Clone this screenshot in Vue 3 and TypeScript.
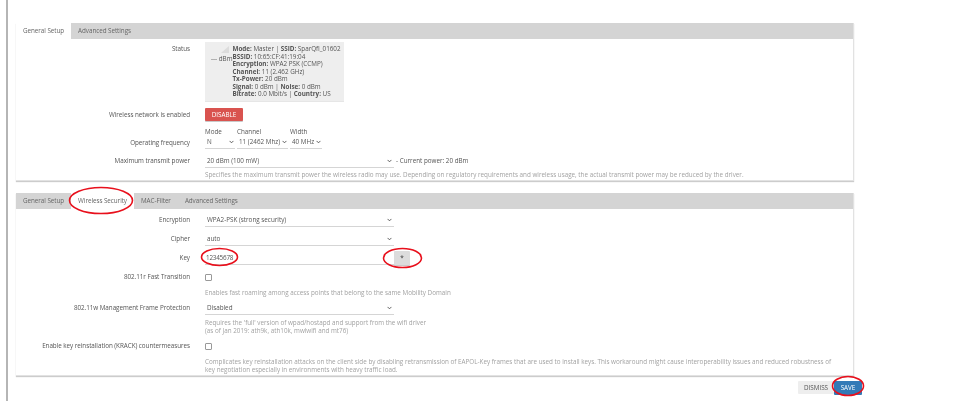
<script setup lang="ts">
interface Tab { label: string; active?: boolean }
const tabsA: Tab[] = [{ label: 'General Setup', active: true }, { label: 'Advanced Settings' }]
const tabsB: Tab[] = [{ label: 'General Setup' }, { label: 'Wireless Security', active: true }, { label: 'MAC-Filter' }, { label: 'Advanced Settings' }]
</script>

<template>
  <div class="page">
    <section class="panel first">
      <nav class="tabs">
        <span v-for="t in tabsA" :key="t.label" class="tab" :class="{ active: t.active }">{{ t.label }}</span>
      </nav>
      <div class="body body-a">
        <div class="row status-row">
          <label>Status</label>
          <div class="status">
            <div class="signal">
              <svg width="8" height="7" viewBox="0 0 8 7"><path d="M0 7 L8 0 V7 Z" fill="#dcdcdc" /></svg>
              <span>--- dBm</span>
            </div>
            <div class="info">
              <div><b>Mode:</b> Master | <b>SSID:</b> SparQfi_01602</div>
              <div><b>BSSID:</b> 10:65:CF:41:19:04</div>
              <div><b>Encryption:</b> WPA2 PSK (CCMP)</div>
              <div><b>Channel:</b> 11 (2.462 GHz)</div>
              <div><b>Tx-Power:</b> 20 dBm</div>
              <div><b>Signal:</b> 0 dBm | <b>Noise:</b> 0 dBm</div>
              <div><b>Bitrate:</b> 0.0 Mbit/s | <b>Country:</b> US</div>
            </div>
          </div>
        </div>
        <div class="row disable-row">
          <label>Wireless network is enabled</label>
          <button class="btn red">DISABLE</button>
        </div>
        <div class="row freq-row">
          <label>Operating frequency</label>
          <div class="freq">
            <div class="col c-mode"><span class="cap">Mode</span><div class="select small"><span>N</span><svg class="chev" viewBox="0 0 6 4"><path d="M.7.7 3 3 5.3.7" /></svg></div></div>
            <div class="col c-chan"><span class="cap">Channel</span><div class="select small"><span>11 (2462 Mhz)</span><svg class="chev" viewBox="0 0 6 4"><path d="M.7.7 3 3 5.3.7" /></svg></div></div>
            <div class="col c-width"><span class="cap">Width</span><div class="select small"><span>40 MHz</span><svg class="chev" viewBox="0 0 6 4"><path d="M.7.7 3 3 5.3.7" /></svg></div></div>
          </div>
        </div>
        <div class="row power-row">
          <label>Maximum transmit power</label>
          <div class="select wide"><span>20 dBm (100 mW)</span><svg class="chev" viewBox="0 0 6 4"><path d="M.7.7 3 3 5.3.7" /></svg></div>
          <span class="current">- Current power: 20 dBm</span>
        </div>
        <p class="hint hint-power">Specifies the maximum transmit power the wireless radio may use. Depending on regulatory requirements and wireless usage, the actual transmit power may be reduced by the driver.</p>
      </div>
    </section>

    <section class="panel second">
      <nav class="tabs">
        <span v-for="t in tabsB" :key="t.label" class="tab" :class="{ active: t.active }">{{ t.label }}</span>
      </nav>
      <div class="body body-b">
        <div class="row form-row">
          <label>Encryption</label>
          <div class="select wide"><span>WPA2-PSK (strong security)</span><svg class="chev" viewBox="0 0 6 4"><path d="M.7.7 3 3 5.3.7" /></svg></div>
        </div>
        <div class="row form-row">
          <label>Cipher</label>
          <div class="select wide"><span>auto</span><svg class="chev" viewBox="0 0 6 4"><path d="M.7.7 3 3 5.3.7" /></svg></div>
        </div>
        <div class="row form-row">
          <label>Key</label>
          <div class="select key"><span class="key-value">12345678</span><button class="reveal">*</button></div>
        </div>
        <div class="row check-row">
          <label>802.11r Fast Transition</label>
          <i class="check"></i>
        </div>
        <p class="hint hint-ft">Enables fast roaming among access points that belong to the same Mobility Domain</p>
        <div class="row form-row mfp">
          <label>802.11w Management Frame Protection</label>
          <div class="select wide"><span>Disabled</span><svg class="chev" viewBox="0 0 6 4"><path d="M.7.7 3 3 5.3.7" /></svg></div>
        </div>
        <p class="hint hint-mfp">Requires the 'full' version of wpad/hostapd and support from the wifi driver<br />(as of Jan 2019: ath9k, ath10k, mwlwifi and mt76)</p>
        <div class="row check-row krack">
          <label>Enable key reinstallation (KRACK) countermeasures</label>
          <i class="check"></i>
        </div>
        <p class="hint hint-krack">Complicates key reinstallation attacks on the client side by disabling retransmission of EAPOL-Key frames that are used to install keys. This workaround might cause interoperability issues and reduced robustness of<br />key negotiation especially in environments with heavy traffic load.</p>
      </div>
    </section>

    <div class="actions">
      <button class="btn dismiss">DISMISS</button>
      <button class="btn save">SAVE</button>
    </div>

    <svg class="marks" width="960" height="401" viewBox="0 0 960 401">
      <ellipse cx="101" cy="200.5" rx="31.5" ry="13" />
      <ellipse cx="219.5" cy="257" rx="18" ry="8.5" />
      <ellipse cx="402.5" cy="258" rx="19" ry="9.5" />
      <ellipse cx="848" cy="386" rx="15.5" ry="9.5" />
    </svg>
  </div>
</template>

<style>
html, body { margin: 0; background: #fff; }
</style>

<style scoped>
.page {
  position: relative;
  width: 960px;
  height: 401px;
  box-sizing: border-box;
  overflow: hidden;
  padding: 23px 0 0 16px;
  background: #fff;
  font-family: "Open Sans", sans-serif;
  font-size: 6.3px;
  line-height: 8px;
  color: #555;
  filter: blur(0.3px);
}
.page::before {
  content: "";
  position: absolute;
  left: 6px;
  top: 0;
  bottom: 0;
  width: 1.5px;
  background: #b5b5b5;
}
.panel {
  width: 838px;
  box-sizing: border-box;
  background: #fff;
  border: solid #e2e2e2;
  border-width: 0 1px 1px 0;
  box-shadow: 0 1px 1px #ccc;
}
.first { height: 158px; }
.second { height: 183px; margin-top: 12px; }
.tabs {
  display: flex;
  height: 16px;
  background: #d4d4d4;
}
.tab {
  display: flex;
  align-items: center;
  padding: 0 7px;
  white-space: nowrap;
  color: #666;
  letter-spacing: -0.05px;
}
.tab.active { background: #fff; }
.row { display: flex; align-items: center; }
label {
  flex: 0 0 174px;
  margin-right: 15px;
  text-align: right;
  white-space: nowrap;
  letter-spacing: -0.04px;
}
.body-a { padding-top: 3px; }
.status-row { align-items: flex-start; }
.status-row label { margin-top: 3px; }
.status {
  display: flex;
  width: 139px;
  height: 60px;
  box-sizing: border-box;
  padding: 3px 0 0 6px;
  background: #eeeeee;
  border-bottom: 1px solid #e6e6e6;
  line-height: 7.5px;
}
.signal {
  flex: 0 0 21px;
  display: flex;
  flex-direction: column;
  align-items: center;
  padding-top: 1px;
  gap: 2px;
  white-space: nowrap;
}
.signal svg { margin-left: 7px; }
.info { white-space: nowrap; }
.info b { font-weight: 700; }
.disable-row { margin-top: 6px; height: 13px; }
.btn {
  border: 0;
  padding: 0;
  font: inherit;
  border-radius: 1px;
}
.red {
  width: 38px;
  height: 13px;
  background: #d9534f;
  color: #fff;
  box-shadow: 0 1px 0 #c9c9c9;
}
.freq-row { margin-top: 10px; height: 18px; align-items: flex-end; }
.freq-row label { padding-bottom: 2px; }
.freq { display: flex; gap: 2px; }
.col { display: flex; flex-direction: column; }
.cap { height: 5px; line-height: 5px; margin-bottom: 2px; }
.c-mode { width: 30px; }
.c-chan { width: 51px; }
.c-width { width: 32px; }
.select {
  display: flex;
  align-items: center;
  justify-content: space-between;
  box-sizing: border-box;
  height: 14px;
  padding: 0 2px 0 2px;
  border-bottom: 1px solid #d5d5d5;
  white-space: nowrap;
}
.select.small { height: 13px; padding: 0 1px 0 2px; }
.wide { width: 189px; }
.chev { width: 5px; height: 4px; flex: none; fill: none; stroke: #444; stroke-width: 1; }
.power-row { margin-top: 5px; }
.current { margin-left: 2px; }
.hint {
  margin: 0 0 0 189px;
  color: #a2a2a2;
  white-space: nowrap;
}
.hint-power { margin-top: 3px; }
.body-b { padding-top: 4px; }
.form-row { margin-bottom: 5px; }
.key { width: 205px; padding-left: 1px; }
.key-value { letter-spacing: -0.2px; }
.reveal {
  width: 16px;
  height: 14px;
  margin-right: -2px;
  border: 0;
  border-radius: 1px;
  background: #dcdcdc;
  box-shadow: 0 1px 0 #c9c9c9;
  color: #333;
  font: inherit;
  padding: 0;
}
.check-row { height: 8px; margin-top: 8px; }
.check {
  width: 5px;
  height: 5px;
  border: 1px solid #999;
  border-radius: 1px;
  background: #fff;
}
.hint-ft { margin-top: 8px; }
.mfp { margin-top: 4px; margin-bottom: 0; }
.hint-mfp { margin-top: 4px; }
.krack { margin-top: 7px; }
.hint-krack { margin-top: 8px; }
.actions {
  display: flex;
  margin: 5px 0 0 782px;
}
.dismiss {
  width: 36px;
  height: 13px;
  background: #eeeeee;
  color: #555;
}
.save {
  width: 28px;
  height: 14px;
  background: #337ab7;
  color: #fff;
}
.marks {
  position: absolute;
  left: 0;
  top: 0;
  pointer-events: none;
}
.marks ellipse {
  fill: none;
  stroke: #e8101c;
  stroke-width: 1.6;
}
</style>
